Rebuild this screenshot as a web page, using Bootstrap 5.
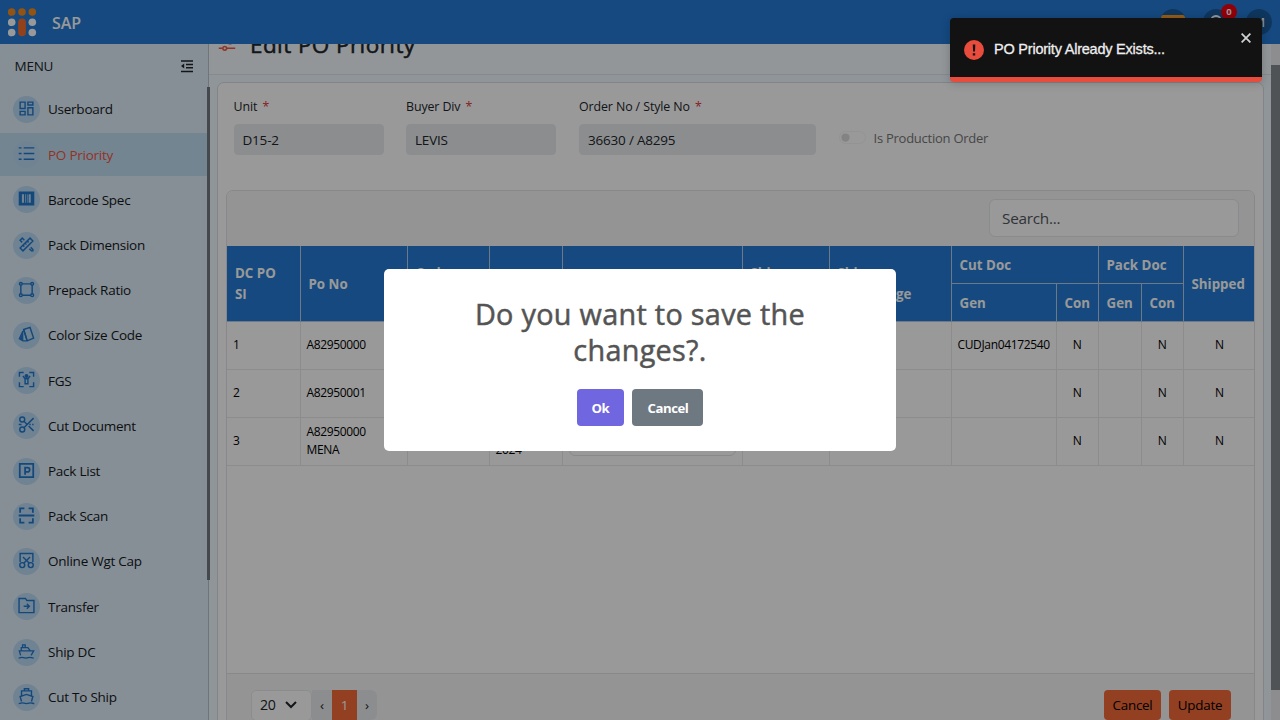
<!DOCTYPE html>
<html lang="en">
<head>
<meta charset="utf-8">
<meta name="viewport" content="width=device-width, initial-scale=1">
<title>SAP - Edit PO Priority</title>
<link href="https://cdn.jsdelivr.net/npm/bootstrap@5.3.0/dist/css/bootstrap.min.css" rel="stylesheet">
<style>
body{font-family:"Open Sans","Noto Sans",sans-serif;font-size:13.5px;letter-spacing:-.25px;color:#212529;background:#eff8ff}
.topbar{height:44px;background:#237bd5;flex:none}
.brandname{font-size:16px;font-weight:600;letter-spacing:-.1px;margin:2px 0 0 15px}
.round-btn{width:26px;height:26px;background:#1a5a9c;margin-left:17px}
.notif{position:absolute;left:18px;top:-5px;width:16px;height:16px;font-size:9.5px;line-height:16px;background:#f00010;letter-spacing:0}
.sidebar{width:209px;background:#dfeefa;border-right:1px solid #b7c3cd;flex:none;position:relative}
.menu-head{height:43.8px;padding:0 14px 0 14.5px}
.menu-item{height:43.23px;margin-bottom:2px;padding-left:12.5px;color:#15181b;text-decoration:none}
.menu-item.active{background:#c1def3;color:#f2543c}
.menu-item i{width:27px;height:27px;background:#bbdaf6;border-radius:50%;margin-right:8.5px;padding-bottom:2px}
.menu-item svg{width:17px;height:17px}
.side-scroll{position:absolute;right:-2px;top:43px;width:3px;height:493px;background:#747a80}
svg{fill:none;stroke:currentColor;stroke-width:2}
.menu-item svg{color:#2277cc}
.page-title{height:61px;margin-top:-30px;background:#f3faff;border-bottom:1px solid #dfe6eb;padding-left:9px;flex:none}
.page-title h1{font-size:22.5px;font-weight:500;margin:0 0 0 14px;letter-spacing:.42px;-webkit-text-stroke:.5px}
.panel{margin:7px 7px 0 8px;background:#fff;border:1px solid #d9dde1;border-radius:7px;padding:0 8px;flex:1}
.fields{padding:15px 7px 0 7.5px;height:107px}
.fields label{font-size:12.4px;display:block;height:26px;line-height:18px;letter-spacing:-.1px}
.fields label b{font-weight:400;color:#e03535;margin-left:2px}
.fields .form-control{height:31px;background:#e9ecef;border-color:#e9ecef;font-size:13.5px;padding:0 8px;letter-spacing:-.2px;border-radius:4px;color:#212529}
.fields .form-check{margin:30px 0 0 22.5px;padding-left:0;min-height:0}
.fields .form-switch .form-check-input{width:27px;height:13px;margin:3px 8px 0 0;float:none;border-color:#eee;opacity:.55}
.prod{color:#777;line-height:20px;font-size:13px}
.inner{border:1px solid #e0e3e5;border-radius:7px;height:620px;overflow:hidden}
.toolrow{height:55px;background:#f7f7f7;padding:0 15px 1px 0}
.toolrow .form-control{width:250px;height:38px;font-size:15.3px;letter-spacing:-.25px;border-color:#e6e8ea;border-radius:6px}
.toolrow .form-control::placeholder{color:#50565c}
.po-grid{table-layout:fixed;width:1028px;margin:0;border-collapse:collapse;font-size:12px;letter-spacing:-.35px}
.po-grid th,.po-grid td{border:1px solid #e9eaeb;border-left-width:0;vertical-align:middle;color:#000}
.po-grid td{height:48px;padding:0 6px;line-height:18px;background:#fff}
.po-grid th{background:#237bd5;color:#fff;font-weight:700;font-size:13.3px;line-height:21px;padding:2px 8px 0;height:37.5px;letter-spacing:.02px;white-space:nowrap;border-color:#b5cbe2;border-top:0}
.po-grid th.sub{border-top:1px solid #769fca}
.po-grid th.tight{word-spacing:-3px}
.po-grid td:nth-child(n+9){text-align:center;padding:0}
.po-grid td:last-child,.po-grid th.end{border-right:0}
.po-grid .form-control{height:29px;border-color:#e3e5e7}
.grid-space{height:207px;background:#fff}
.grid-foot{background:#f7f7f7;border-top:1px solid #e1e3e5;height:100px;padding:16px 23px 0 24px}
.pg-size{width:61px;height:31px;border:1px solid #e8eaec;background:#fff;border-radius:5px;padding:0 14px 0 8px;font-size:14.2px}
.pg{width:26px;height:30px;background:#e9ecef;line-height:31px;text-align:center}
.pg.on{background:#f36a3a;color:#fff;width:25px}
.btn-po{background:#f36a3a;height:30px;border-radius:4px;padding:0;width:57px;font-size:13.4px;letter-spacing:-.25px;color:#000;line-height:30px;margin-left:8px;border:0}
.btn-po.upd{width:62px}
.vscroll{width:9px;background:#ebebf0;padding-top:21px;flex:none}
.vscroll div{height:625px;background:#868b90}
.shade{position:absolute;inset:0;background:rgba(0,0,0,.4)}
.dialog{width:512px;height:181.5px;border-radius:5px;background:#fff;margin-bottom:.5px}
.dialog h2{font-size:28.8px;line-height:36px;font-weight:500;color:#545454;margin:26.500px 0 21.500px;letter-spacing:.3px;-webkit-text-stroke:.5px}
.dlg-btn{height:37px;border-radius:4px;border:0;color:#fff;font-size:13.2px;font-weight:700;letter-spacing:-.5px;margin:0 4.2px;padding:2px 0 0}
.toast-box{position:absolute;left:950px;top:18px;width:312px;height:64px;background:#121212;border-radius:4px;overflow:hidden;border-bottom:5px solid #e74c3c;box-shadow:0 1px 10px rgba(0,0,0,.2);font-family:"Liberation Sans",Arial,sans-serif;font-size:14.5px;letter-spacing:-.22px;color:#eee;padding:5px 14px 0;-webkit-text-stroke:.3px #eee}
.toast-x{position:absolute;right:11px;top:15px}
</style>
</head>
<body class="vh-100 overflow-hidden position-relative">
<div class="vh-100 d-flex flex-column">
<header class="topbar d-flex align-items-center text-white px-2">
<svg width="29" height="29" viewBox="0 0 29 29" style="stroke:none"><g fill="#f58b1e"><circle cx="3.700" cy="4" r="3.8"/><circle cx="14" cy="4" r="3.8"/><circle cx="24.3" cy="4" r="3.8"/></g><g fill="#fff"><circle cx="3.700" cy="14.3" r="3.8"/><circle cx="24.3" cy="14.3" r="3.8"/><circle cx="3.700" cy="24.5" r="3.8"/><circle cx="24.3" cy="24.5" r="3.8"/></g><rect x="10.2" y="10.5" width="7.7" height="17.8" rx="3.8" fill="#f36f2e"/></svg>
<span class="brandname">SAP</span>
<div class="d-flex ms-auto">
<span class="round-btn rounded-circle overflow-hidden"><svg width="26" height="26" style="stroke:none"><rect x="1" y="6" width="24" height="16" rx="2" fill="#f89a28"/></svg></span>
<span class="round-btn rounded-circle position-relative"><svg width="26" height="26"><path d="M8 19V12a5 5 0 0 1 10 0v7M6 19h14"/></svg><span class="notif rounded-circle text-center fw-bold">0</span></span>
<span class="round-btn rounded-circle text-center" style="line-height:26px">M</span>
</div>
</header>
<div class="d-flex flex-grow-1" style="min-height:0">
<nav class="sidebar">
<div class="menu-head d-flex align-items-center justify-content-between"><span>MENU</span><svg width="14" height="14" viewBox="0 0 14 14" style="stroke-width:1.5"><path d="M1 2h12M6 5.5h7M6 8.8h7M1 12.5h12"/><path d="M4.2 4.6v5L1 7.1z" fill="currentColor" stroke="none"/></svg></div>
<a class="menu-item d-flex align-items-center"><i class="d-flex align-items-center justify-content-center"><svg viewBox="0 0 24 24"><path d="M3 3h7v9H3zM14 3h7v4h-7zM3 16h7v5H3zM14 11h7v10h-7z"/></svg></i>Userboard</a>
<a class="menu-item active d-flex align-items-center"><i class="d-flex align-items-center justify-content-center"><svg viewBox="0 0 24 24"><path d="M8 4h15M8 12h15M8 20h15M1 4h4M1 12h4M1 20h4"/></svg></i>PO Priority</a>
<a class="menu-item d-flex align-items-center"><i class="d-flex align-items-center justify-content-center"><svg viewBox="0 0 24 24"><path d="M1 2h22v20H1zM5.5 6v12h3V6zM10 6v12h1V6zM12.5 6v12h1V6zM15 6v12h3V6z" fill="currentColor" fill-rule="evenodd" stroke="none"/></svg></i>Barcode Spec</a>
<a class="menu-item d-flex align-items-center"><i class="d-flex align-items-center justify-content-center"><svg viewBox="0 0 24 24"><path d="M17 3l4 4L7 21l-4-4zM10 10l2 2M13 7l2 2M7 13l2 2M9 6L6 3 3 6l3 3M16 18l3 3h2v-2l-3-3"/></svg></i>Pack Dimension</a>
<a class="menu-item d-flex align-items-center"><i class="d-flex align-items-center justify-content-center"><svg viewBox="0 0 24 24"><path d="M6 4h12M20 6v12M18 20H6M4 18V6"/><circle cx="4" cy="4" r="2"/><circle cx="20" cy="4" r="2"/><circle cx="4" cy="20" r="2"/><circle cx="20" cy="20" r="2"/></svg></i>Prepack Ratio</a>
<a class="menu-item d-flex align-items-center"><i class="d-flex align-items-center justify-content-center"><svg viewBox="0 0 24 24"><path d="M8 5l9-3 5 15-9 4zM7 7L2 18l5 3h5"/><path d="M7 9v11l-4-2z" fill="currentColor" stroke-width="1"/><path d="M8 5l5 16"/></svg></i>Color Size Code</a>
<a class="menu-item d-flex align-items-center"><i class="d-flex align-items-center justify-content-center"><svg viewBox="0 0 24 24"><path d="M2 8V2h6M16 2h6v6M2 16v6h6M16 22h6v-6M7 7l3 4v7h4v-7l3-4M10 11h4"/><circle cx="12" cy="7" r="1.8" fill="currentColor"/></svg></i>FGS</a>
<a class="menu-item d-flex align-items-center"><i class="d-flex align-items-center justify-content-center"><svg viewBox="0 0 24 24"><circle cx="6" cy="5" r="3.5"/><circle cx="6" cy="19" r="3.5"/><path d="M8 17L22 3M8 7l5 5M15 14l7 7M1 12h4M11 12h2M16 12h2M20 12h2"/></svg></i>Cut Document</a>
<a class="menu-item d-flex align-items-center"><i class="d-flex align-items-center justify-content-center"><svg viewBox="0 0 24 24"><path d="M2.500 2.500h19v19h-19zM10 18V8h3.5a3 3 0 0 1 0 6H10" stroke-width="2.500"/></svg></i>Pack List</a>
<a class="menu-item d-flex align-items-center"><i class="d-flex align-items-center justify-content-center"><svg viewBox="0 0 24 24"><path d="M3 8V2h6M15 2h6v6M3 16v6h6M15 22h6v-6M1 12h22" stroke-width="2.500"/></svg></i>Pack Scan</a>
<a class="menu-item d-flex align-items-center"><i class="d-flex align-items-center justify-content-center"><svg viewBox="0 0 24 24"><path d="M3 14V2h18v12M7 7l9 9M17 7l-9 9"/><circle cx="6" cy="18.500" r="3.500"/><circle cx="18" cy="18.500" r="3.500"/></svg></i>Online Wgt Cap</a>
<a class="menu-item d-flex align-items-center"><i class="d-flex align-items-center justify-content-center"><svg viewBox="0 0 24 24"><path d="M1.500 2h9l2 3h10v17h-21zM8 13h8M12.500 9.500L16 13l-3.500 3.500"/></svg></i>Transfer</a>
<a class="menu-item d-flex align-items-center"><i class="d-flex align-items-center justify-content-center"><svg viewBox="0 0 26 24"><path d="M5 11V6h10l4 5M7 6V2h4v4M4 18L2 11h22l-4 7M1 22c3 0 3-1 5-1s3 1 6 1 4-1 6-1 3 1 6 1"/></svg></i>Ship DC</a>
<a class="menu-item d-flex align-items-center"><i class="d-flex align-items-center justify-content-center"><svg viewBox="0 0 24 24"><path d="M5 11V4h14v7M9 4V1h6v3M5 19L3 12l9-3 9 3-2 7M1 22c3 0 3-1 5-1s3 1 6 1 4-1 6-1 3 1 5 1"/></svg></i>Cut To Ship</a>
<div class="side-scroll"></div>
</nav>
<main class="flex-grow-1 d-flex flex-column overflow-hidden">
<div class="page-title d-flex align-items-center"><svg width="18" height="18" viewBox="0 0 24 24" style="color:#f2573c;margin-top:-2px"><path d="M1 9h12M19 9h4M1 19h5M12 19h11"/><circle cx="16" cy="10" r="3"/><circle cx="9" cy="19" r="2.500"/></svg><h1>Edit PO Priority</h1></div>
<section class="panel">
<div class="fields d-flex align-items-start">
<div style="width:150px"><label>Unit <b>*</b></label><input class="form-control" value="D15-2" readonly></div>
<div style="width:150px;margin-left:22.500px"><label>Buyer Div <b>*</b></label><input class="form-control" value="LEVIS" readonly></div>
<div style="width:237px;margin-left:23px"><label>Order No / Style No <b>*</b></label><input class="form-control" value="36630 / A8295" readonly></div>
<div class="form-check form-switch d-flex"><input class="form-check-input" type="checkbox" disabled><span class="prod">Is Production Order</span></div>
</div>
<div class="inner">
<div class="toolrow d-flex align-items-center justify-content-end"><input class="form-control" placeholder="Search..."></div>
<table class="po-grid">
<colgroup><col style="width:73px"><col style="width:107px"><col style="width:82px"><col style="width:73px"><col style="width:180px"><col style="width:87px"><col style="width:122px"><col style="width:105px"><col style="width:42px"><col style="width:43px"><col style="width:42px"><col style="width:72px"></colgroup>
<thead>
<tr><th rowspan="2">DC PO<br>SI</th><th rowspan="2">Po No</th><th rowspan="2">Order<br>Qty</th><th rowspan="2">Date</th><th rowspan="2">Priority</th><th rowspan="2">Ship<br>Mode</th><th rowspan="2" class="tight">Ship<br>Qty Change</th><th colspan="2">Cut Doc</th><th colspan="2">Pack Doc</th><th rowspan="2" class="end">Shipped</th></tr>
<tr><th class="sub">Gen</th><th class="sub">Con</th><th class="sub">Gen</th><th class="sub">Con</th></tr>
</thead>
<tbody>
<tr><td>1</td><td>A82950000</td><td></td><td>Jan<br>2024</td><td><input class="form-control"></td><td></td><td></td><td>CUDJan04172540</td><td>N</td><td></td><td>N</td><td>N</td></tr>
<tr><td>2</td><td>A82950001</td><td></td><td>Jan<br>2024</td><td><input class="form-control"></td><td></td><td></td><td></td><td>N</td><td></td><td>N</td><td>N</td></tr>
<tr><td>3</td><td>A82950000<br>MENA</td><td></td><td>Jan<br>2024</td><td><input class="form-control"></td><td></td><td></td><td></td><td>N</td><td></td><td>N</td><td>N</td></tr>
</tbody>
</table>
<div class="grid-space"></div>
<div class="grid-foot d-flex align-items-start">
<div class="pg-size d-flex align-items-center justify-content-between"><span>20</span><svg width="12" height="8" viewBox="0 0 12 8"><path d="M1 1l5 5 5-5"/></svg></div>
<span class="pg" style="width:20px">‹</span><span class="pg on">1</span><span class="pg rounded-end" style="width:20px">›</span>
<button class="btn btn-po ms-auto">Cancel</button><button class="btn btn-po upd">Update</button>
</div>
</div>
</section>
</main>
<div class="vscroll"><div></div></div>
</div>
</div>
<div class="shade d-flex align-items-center justify-content-center">
<div class="dialog text-center"><h2>Do you want to save the<br>changes?.</h2><div class="d-flex justify-content-center"><button class="dlg-btn" style="width:47.500px;background:#7066e0">Ok</button><button class="dlg-btn" style="width:71px;background:#6e7881">Cancel</button></div></div>
</div>
<div class="toast-box d-flex align-items-center"><svg width="20" height="20" viewBox="0 0 20 20" style="stroke:none"><circle cx="10" cy="10" r="10" fill="#e74c3c"/><path d="M8.800 4.500h2.500l-.3 7H9.100zM8.800 13.200h2.400v2.300H8.800z" fill="#121212"/></svg><span style="margin-left:10px">PO Priority Already Exists...</span><svg class="toast-x" width="10" height="10" viewBox="0 0 10 10" style="stroke:#d0d0d0;stroke-width:1.800"><path d="M.6.6l8.800 8.800M9.400.6L.6 9.400"/></svg></div>
<script src="https://cdn.jsdelivr.net/npm/bootstrap@5.3.0/dist/js/bootstrap.bundle.min.js"></script>
</body>
</html>
